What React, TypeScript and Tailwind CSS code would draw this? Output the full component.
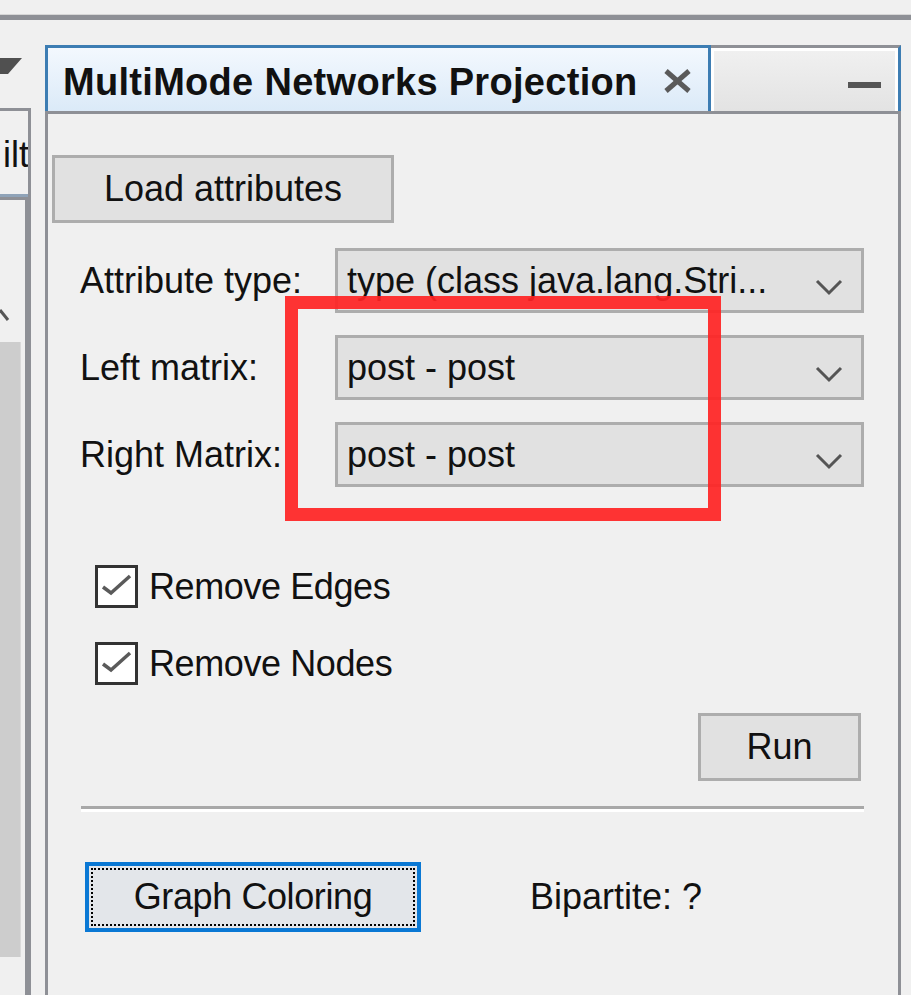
import React from 'react';

const FONT = { fontFamily: '"Liberation Sans", Arial, sans-serif' };

const Chevron: React.FC = () => (
  <svg width="30" height="18" viewBox="0 0 30 18" className="shrink-0">
    <polyline points="2,3 14,15 26,3" fill="none" stroke="#555" strokeWidth="3" />
  </svg>
);

const Combo: React.FC<{ value: string }> = ({ value }) => (
  <div className="w-[529px] h-[65px] shrink-0 border-[3px] border-[#adadad] bg-[#e1e1e1] flex items-center pl-[9px] pr-[16px]">
    <span className="flex-1 whitespace-nowrap">{value}</span>
    <div className="pt-[12px]">
      <Chevron />
    </div>
  </div>
);

const Check: React.FC<{ label: string }> = ({ label }) => (
  <div className="flex items-center h-[43px] pl-[47px]">
    <div className="w-[43px] h-[43px] border-[3px] border-[#333] bg-white shrink-0">
      <svg width="37" height="37" viewBox="0 0 37 37">
        <polyline points="5,19 13,25 32,8" fill="none" stroke="#5a5a5a" strokeWidth="3.5" />
      </svg>
    </div>
    <span className="ml-[11px] tracking-[-0.4px]">{label}</span>
  </div>
);

const App: React.FC = () => {
  return (
    <div className="relative w-[911px] h-[995px] overflow-hidden bg-[#f0f0f0] text-[#111] text-[36px] leading-none" style={FONT}>
      {/* top frame line */}
      <div className="h-[14px]" />
      <div className="h-[6px] border-t border-[#d6d6d6] bg-[#8e9096]" />

      <div className="flex">
        {/* left neighbouring panel, clipped */}
        <div className="w-[31px] shrink-0 flex flex-col">
          <div className="h-[38px]" />
          <svg width="22" height="16" viewBox="0 0 22 16">
            <polygon points="0,0 22,0 8,16 0,16" fill="#505050" />
          </svg>
          <div className="h-[34px]" />
          <div className="h-[89px] border-t-[3px] border-r-[3px] border-[#8e9096] flex flex-col">
            <div className="flex-1 flex justify-end items-center overflow-hidden pt-[4px]">
              <span className="shrink-0 -mr-[1px]">ilt</span>
            </div>
            <div className="h-[3px] bg-[#8fa3b8]" />
          </div>
          <div className="h-[800px] border-t-[3px] border-r-[6px] border-[#8e9096] flex flex-col">
            <div className="h-[108px]" />
            <svg width="10" height="16" viewBox="0 0 10 16">
              <polyline points="0,2 8,12" fill="none" stroke="#555" strokeWidth="3" />
            </svg>
            <div className="h-[18px]" />
            <div className="w-[21px] h-[615px] bg-[#cdcdcd] border-r border-[#dadada]" />
          </div>
        </div>

        <div className="w-[14px] shrink-0" />

        {/* MultiMode panel */}
        <div className="w-[856px] shrink-0 mt-[25px] flex flex-col">
          <div className="flex h-[66px]">
            <div className="w-[666px] border-t-[3px] border-l-[3px] border-r-[3px] border-[#3d7db3] bg-gradient-to-b from-[#f3f8fe] to-[#dbeaf8] flex items-center pl-[15px] pr-[16px]">
              <span className="flex-1 font-bold text-[38px] tracking-[0.3px] whitespace-nowrap pt-[4px]">MultiMode Networks Projection</span>
              <svg width="29" height="24" viewBox="0 0 29 24" className="mt-[2px]">
                <line x1="3" y1="2" x2="26" y2="22" stroke="#5a5a5a" strokeWidth="5" />
                <line x1="26" y1="2" x2="3" y2="22" stroke="#5a5a5a" strokeWidth="5" />
              </svg>
            </div>
            <div className="w-[190px] border-t-[3px] border-t-[#8e9096] border-r-[3px] border-r-[#3d7db3]">
              <div className="h-full border-[3px] border-b-0 border-white bg-gradient-to-b from-[#f0f0f0] to-[#e3e3e3] flex items-center justify-end pr-[14px]">
                <div className="w-[33px] h-[6px] bg-[#555] mt-[8px]" />
              </div>
            </div>
          </div>
          <div className="h-[3px] bg-[#8e9096]" />

          <div className="h-[900px] border-l-[3px] border-r-[3px] border-[#8e9096] flex flex-col">
            <div className="mt-[41px] ml-[4px] w-[342px] h-[68px] border-[3px] border-[#adadad] bg-[#e1e1e1] flex items-center justify-center">
              Load attributes
            </div>

            <div className="mt-[25px] flex flex-col gap-[22px] pl-[32px]">
              <div className="flex items-center">
                <span className="w-[255px] shrink-0">Attribute type:</span>
                <Combo value="type (class java.lang.Stri..." />
              </div>
              <div className="flex items-center">
                <span className="w-[255px] shrink-0">Left matrix:</span>
                <Combo value="post - post" />
              </div>
              <div className="flex items-center">
                <span className="w-[255px] shrink-0">Right Matrix:</span>
                <Combo value="post - post" />
              </div>
            </div>

            <div className="mt-[78px] flex flex-col gap-[34px]">
              <Check label="Remove Edges" />
              <Check label="Remove Nodes" />
            </div>

            <div className="mt-[28px] flex justify-end pr-[37px]">
              <div className="w-[163px] h-[68px] border-[3px] border-[#adadad] bg-[#e1e1e1] flex items-center justify-center">
                Run
              </div>
            </div>

            <div className="mt-[25px] ml-[33px] mr-[34px] border-t-[3px] border-[#a8a8a8] border-b-[3px] border-b-white" />

            <div className="mt-[50px] ml-[37px] flex items-center">
              <div className="w-[336px] h-[70px] border-[4px] border-[#0a78d4] bg-[#e3e6ea] p-[2px]">
                <div className="h-full border-2 border-dotted border-black flex items-center justify-center tracking-[-0.4px]">
                  Graph Coloring
                </div>
              </div>
              <span className="ml-[109px]">Bipartite: ?</span>
            </div>
          </div>
        </div>
      </div>

      {/* red annotation rectangle */}
      <div className="absolute left-[285px] top-[296px] w-[436px] h-[225px] border-[13px] border-[rgba(255,35,35,0.92)]" />
    </div>
  );
};

export default App;
